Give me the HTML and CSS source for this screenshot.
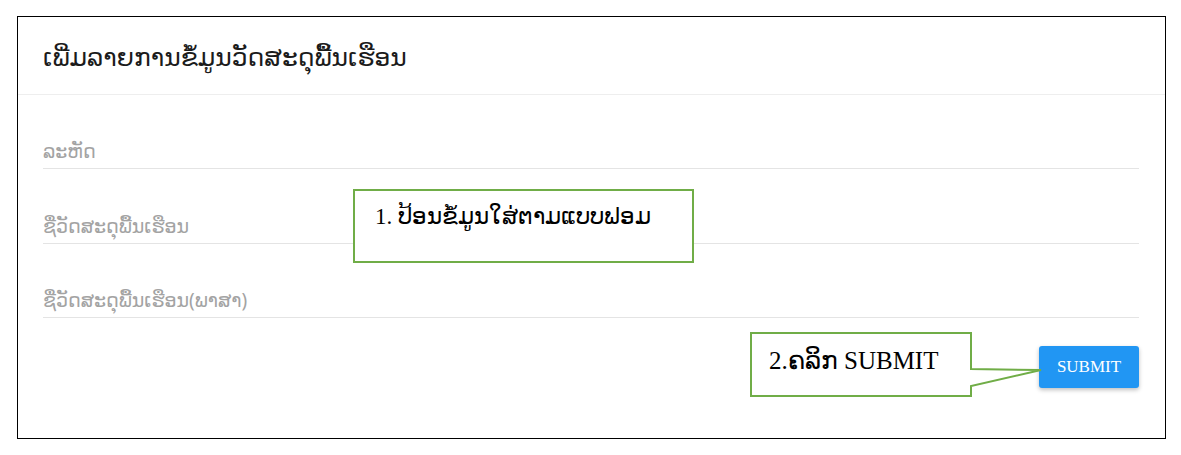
FILE: index.html
```html
<!DOCTYPE html>
<html lang="lo">
<head>
<meta charset="utf-8">
<title>ເພີ່ມລາຍການຂໍ້ມູນວັດສະດຸພື້ນເຮືອນ</title>
<link rel="stylesheet" href="styles.css">
</head>
<body>
<div class="card">
  <div class="card-header">
    <h1 class="title">ເພີ່ມລາຍການຂໍ້ມູນວັດສະດຸພື້ນເຮືອນ</h1>
  </div>
  <div class="card-body">
    <div class="field"><span class="placeholder">ລະຫັດ</span></div>
    <div class="field"><span class="placeholder">ຊື່ວັດສະດຸພື້ນເຮືອນ</span></div>
    <div class="field"><span class="placeholder">ຊື່ວັດສະດຸພື້ນເຮືອນ(ພາສາ)</span></div>
    <div class="actions">
      <button class="btn-submit" type="button">SUBMIT</button>
    </div>
  </div>
</div>

<div class="callout callout-one">1. ປ້ອນຂໍ້ມູນໃສ່ຕາມແບບຟອມ</div>

<div class="callout-two">
  <svg class="callout-shape" width="292" height="66" viewBox="0 0 292 66">
    <path d="M1 1 H221 V37 L291 38 L221 54 V64 H1 Z" fill="#ffffff" stroke="#70ad47" stroke-width="2"/>
  </svg>
  <span class="callout-two-text">2.ຄລິກ SUBMIT</span>
</div>
</body>
</html>
```

FILE: styles.css
```css
html, body {
  margin: 0;
  padding: 0;
  background: #ffffff;
}

body {
  width: 1181px;
  height: 455px;
  position: relative;
  overflow: hidden;
  font-family: "Noto Sans", "DejaVu Sans", sans-serif;
}

.card {
  margin: 16px 0 0 17px;
  width: 1147px;
  height: 421px;
  border: 1px solid #000000;
  background: #ffffff;
}

.card-header {
  height: 77px;
  border-bottom: 1px solid #eeeeee;
  display: flex;
  align-items: center;
  padding: 0 25px;
}

.title {
  margin: 0;
  font-size: 25px;
  font-weight: normal;
  color: #1b1b1b;
  line-height: 32px;
  padding-top: 0;
}

.card-body {
  padding: 0 26px 0 25px;
  display: flex;
  flex-direction: column;
}

.field {
  margin-top: 43px;
  height: 30px;
  border-bottom: 1px solid #e4e4e4;
  display: flex;
  align-items: flex-end;
  box-sizing: content-box;
}

.field + .field {
  margin-top: 43.5px;
}

.placeholder {
  font-size: 19px;
  line-height: 24px;
  color: #a3a3a3;
  padding-bottom: 5px;
}

.actions {
  display: flex;
  justify-content: flex-end;
  margin-top: 28px;
}

.btn-submit {
  width: 100px;
  height: 42px;
  border: none;
  border-radius: 3px;
  background: #2196f3;
  color: #ffffff;
  font-family: "Liberation Serif", "Times New Roman", serif;
  font-size: 17px;
  box-shadow: 0 2px 4px rgba(0, 0, 0, 0.25);
  padding: 0;
}

.callout {
  position: absolute;
  background: #ffffff;
  border: 2px solid #70ad47;
  box-sizing: border-box;
  font-family: "Liberation Serif", "Noto Sans", sans-serif;
  color: #000000;
}

.callout-one {
  left: 353px;
  top: 189px;
  width: 341px;
  height: 74px;
  font-size: 23px;
  line-height: 30px;
  padding: 11px 0 0 20px;
}

.callout-two {
  position: absolute;
  left: 750px;
  top: 332px;
  width: 292px;
  height: 66px;
}

.callout-shape {
  display: block;
}

.callout-two-text {
  position: absolute;
  left: 19px;
  top: 13px;
  font-family: "Liberation Serif", "Noto Sans", sans-serif;
  font-size: 25px;
  line-height: 32px;
  color: #000000;
  white-space: nowrap;
}
```
